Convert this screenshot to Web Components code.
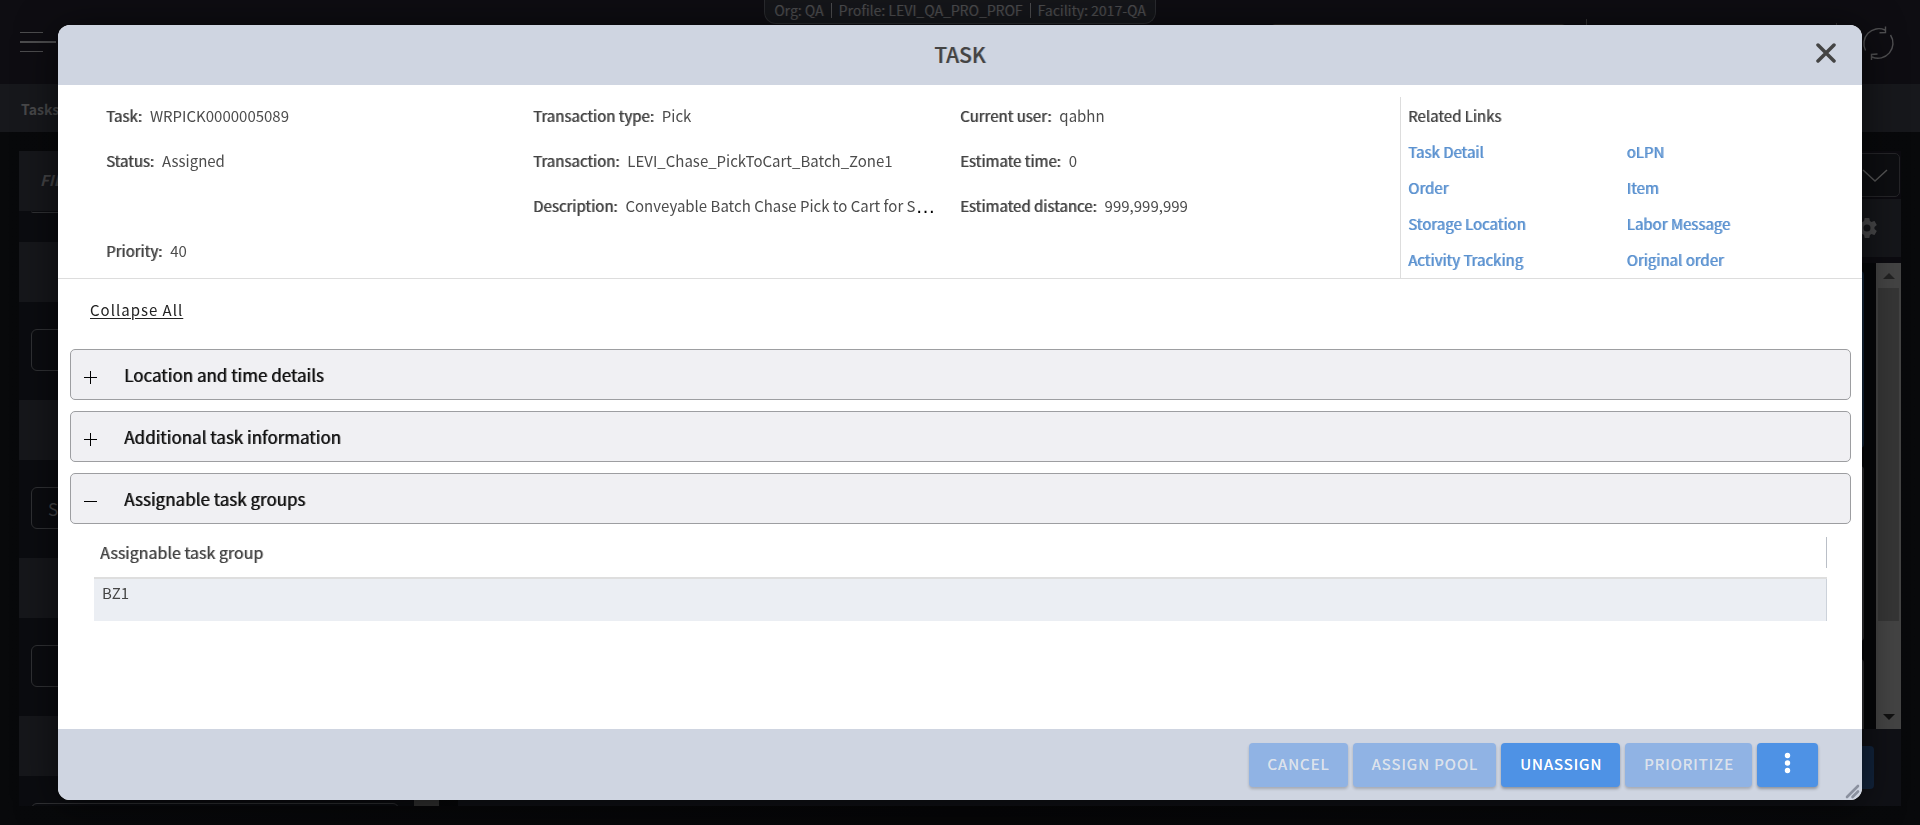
<!DOCTYPE html>
<html lang="en">
<head>
<meta charset="utf-8">
<title>Tasks</title>
<style>
body { margin: 0; background: #08090b; color: #444; font: 15px/20px "Noto Sans CJK SC", "Open Sans", sans-serif; }
</style>
</head>
<body>
<tasks-page></tasks-page>
<task-dialog heading="TASK">
  <task-summary slot="summary">
    <task-field label="Task:">WRPICK0000005089</task-field>
    <task-field label="Transaction type:">Pick</task-field>
    <task-field label="Current user:">qabhn</task-field>
    <task-field label="Status:">Assigned</task-field>
    <task-field label="Transaction:">LEVI_Chase_PickToCart_Batch_Zone1</task-field>
    <task-field label="Estimate time:">0</task-field>
    <span></span>
    <task-field label="Description:" clipped>Conveyable Batch Chase Pick to Cart for S</task-field>
    <task-field label="Estimated distance:">999,999,999</task-field>
    <task-field label="Priority:">40</task-field>
    <related-links slot="links"></related-links>
  </task-summary>
  <accordion-list>
    <accordion-item heading="Location and time details"></accordion-item>
    <accordion-item heading="Additional task information"></accordion-item>
    <accordion-item heading="Assignable task groups" open><group-table></group-table></accordion-item>
  </accordion-list>
  <action-button slot="actions" disabled>CANCEL</action-button>
  <action-button slot="actions" disabled>ASSIGN POOL</action-button>
  <action-button slot="actions">UNASSIGN</action-button>
  <action-button slot="actions" disabled>PRIORITIZE</action-button>
  <action-button slot="actions" name="More actions">
    <svg width="24" height="24" viewBox="0 0 24 24" fill="#fff"><circle cx="11.500" cy="3.500" r="2.700"/><circle cx="11.500" cy="11" r="2.700"/><circle cx="11.500" cy="18.500" r="2.700"/></svg>
  </action-button>
</task-dialog>

<script>
const define = (name, html, setup) => customElements.define(name, class extends HTMLElement {
  connectedCallback() {
    if (this.shadowRoot) return;
    const root = this.attachShadow({ mode: 'open' });
    root.innerHTML = html;
    if (setup) setup(this, root);
  }
});

/* Page behind the dialog, already dimmed */
define('org-pill', `
<style>
:host { display: flex; align-items: center; box-sizing: border-box; height: 24px; padding: 0 9px 3px; background: #15161a; border: 1px solid #2a2b2f; border-top: 0; border-radius: 0 0 12px 12px; color: #4b4b4d; font-size: 14px; line-height: 20px; white-space: nowrap; text-shadow: 1px 0 0 rgba(75,75,77,.3); }
span + span { margin-left: 7px; padding-left: 7px; border-left: 1px solid #4b4b4d; line-height: 15px; }
</style>
<span>Org: QA</span><span>Profile: LEVI_QA_PRO_PROF</span><span>Facility: 2017-QA</span>`);

define('filter-panel', `
<style>
:host { display: flex; flex-direction: column; overflow: hidden; background: #0b0c10; color: #444446; }
h2 { flex: none; margin: 0; height: 60px; padding-left: 21px; background: #16171b; font: italic 700 15px/58px "Noto Sans CJK SC", sans-serif; }
.row { display: flex; flex: 1; min-height: 0; }
.list { flex: 1; overflow: hidden; }
.cut { height: 2px; margin: 0 15px 29px 12px; border-bottom: 1px solid #303134; border-radius: 0 0 5px 5px; box-sizing: border-box; }
.head { height: 60px; margin-bottom: 27px; background: #16171b; }
input { display: block; box-sizing: border-box; width: calc(100% - 27px); height: 42px; margin: 0 0 29px 12px; padding: 0 16px; border: 1px solid #303134; border-radius: 6px; background: transparent; color: inherit; font: 17px/24px "Noto Sans CJK SC", sans-serif; }
input::placeholder { color: #444446; opacity: 1; }
.bar { width: 25px; background: #333; }
</style>
<h2>FILTER</h2>
<div class="row"><div class="list">
<div class="cut"></div>
<div class="head"></div><input aria-label="Filter 1">
<div class="head"></div><input aria-label="Filter 2" placeholder="S">
<div class="head"></div><input aria-label="Filter 3">
<div class="head"></div><input aria-label="Filter 4">
</div><div class="bar"></div></div>`);

define('task-list', `
<style>
:host { display: flex; flex-direction: column; overflow: hidden; background: #0c0b10; }
.sort { flex: none; height: 48px; display: flex; justify-content: flex-end; padding: 0 1px; }
.sort button { width: 260px; height: 44px; margin-top: 2px; padding: 0 11px 0 0; border: 1px solid #252528; border-radius: 5px; background: #0d0e11; text-align: right; }
svg { vertical-align: middle; }
.tools { flex: none; height: 58px; display: flex; align-items: center; justify-content: flex-end; padding-right: 22px; background: #15161a; }
.tools button { border: 0; padding: 0; background: none; line-height: 0; }
.rows { flex: 1; min-height: 0; display: flex; margin-top: 6px; background: #060709; }
.cards { flex: 1; overflow: hidden; padding-right: 12px; }
.card { height: 175px; margin-bottom: 18px; border-right: 2px solid #303032; border-radius: 4px; }
.card.on { height: 177px; margin-top: 8px; border-color: #142638; }
.bar { width: 25px; display: flex; flex-direction: column; align-items: center; background: #444; }
.bar i { width: 21px; height: 333px; background: #363636; }
.up, .down { height: 25px; line-height: 0; display: flex; align-items: center; }
.down { margin-top: auto; }
.foot { flex: none; height: 77px; display: flex; justify-content: flex-end; align-items: flex-start; background: #101116; }
.foot button { width: 120px; height: 43px; margin: 17px 27px 0 0; border: 0; border-radius: 4px; background: #12243c; }
</style>
<div class="sort"><button aria-label="Sort"><svg width="26" height="14" fill="none" stroke="#555" stroke-width="1.500"><path d="M1 1l12 11L25 1"/></svg></button></div>
<div class="tools"><button aria-label="Settings"><svg width="24" height="24" viewBox="0 0 24 24" fill="#48484a"><path d="M19.430 12.980c.040-.320.070-.640.070-.980s-.030-.660-.070-.980l2.110-1.650c.190-.150.240-.420.120-.640l-2-3.460c-.120-.220-.390-.300-.610-.220l-2.490 1c-.520-.400-1.080-.730-1.690-.980l-.380-2.650A.49.49 0 0 0 14 2h-4c-.250 0-.460.180-.490.420l-.380 2.650c-.610.250-1.170.590-1.690.980l-2.490-1c-.230-.090-.490 0-.610.220l-2 3.460c-.130.220-.070.490.120.640l2.110 1.650c-.040.320-.070.650-.070.980s.030.660.070.980l-2.110 1.650c-.190.150-.240.420-.120.640l2 3.460c.120.220.390.300.610.220l2.490-1c.520.400 1.080.730 1.690.980l.380 2.650c.030.240.240.420.490.420h4c.250 0 .460-.180.490-.420l.380-2.650c.610-.250 1.170-.590 1.690-.980l2.490 1c.230.090.490 0 .610-.220l2-3.460c.120-.220.070-.490-.120-.640l-2.110-1.650zM12 15.500a3.500 3.500 0 1 1 0-7 3.500 3.500 0 0 1 0 7z"/></svg></button></div>
<div class="rows"><div class="cards"><div class="card on"></div><div class="card"></div><div class="card"></div></div>
<div class="bar"><span class="up"><svg width="12" height="6"><path d="M0 6L6 0l6 6z" fill="#222"/></svg></span><i></i><span class="down"><svg width="12" height="6"><path d="M0 0l6 6 6-6z" fill="#111"/></svg></span></div></div>
<div class="foot"><button aria-label="Actions"></button></div>`);

define('tasks-page', `
<style>
:host { display: flex; flex-direction: column; height: 100vh; overflow: hidden; background: linear-gradient(90deg, #08090b, #060608 50%, #08090b); }
header { flex: none; display: grid; grid-template-columns: 1fr auto 1fr; align-items: start; height: 84px; background: #0e0d12; }
header button { border: 0; padding: 0; background: none; line-height: 0; }
.menu { margin: 32px 0 0 20px; justify-self: start; }
.end { display: flex; justify-content: flex-end; }
.search { width: 295px; height: 36px; margin: 24px 20px 0 0; box-sizing: border-box; border: 1px solid #2b2624; border-radius: 4px; background: none; }
.line { width: 1px; height: 40px; background: #333; margin-top: 19px; }
.line.low { margin-top: 23px; }
.gap { width: 249px; }
.sync { margin: 24px 25px 0; }
nav { flex: none; height: 48px; padding-left: 21px; background: #17181c; }
nav a { color: #48484a; font-weight: 700; font-size: 14px; line-height: 50px; text-decoration: none; }
main { flex: 1; min-height: 0; display: grid; grid-template-columns: 420px minmax(0, 1fr); gap: 19px; padding: 19px; }
</style>
<header>
<button class="menu" aria-label="Menu"><svg width="36" height="20" stroke="#4c4c4e"><path d="M0 .500h23M0 19.500h23"/><path d="M0 10h36" stroke-width="2"/></svg></button>
<org-pill></org-pill>
<div class="end"><input class="search" aria-label="Search"><span class="line"></span><span class="gap"></span><span class="line low"></span>
<button class="sync" aria-label="Refresh"><svg width="33" height="35" viewBox="0 0 33 35" fill="none" stroke="#505052" stroke-width="1.400"><path d="M3.500 24.500A15 15 0 0 1 23 4M28.500 9A15 15 0 0 1 10 31M23.500 0.500v6l-6 .200M9.500 34v-5.500l6-.500"/></svg></button></div>
</header>
<nav><a href="#tasks">Tasks</a></nav>
<main><filter-panel></filter-panel><task-list></task-list></main>`);

/* Dialog */
define('task-dialog', `
<style>
:host { position: fixed; inset: 25px 58px; display: flex; flex-direction: column; overflow: hidden; border-radius: 12px; background: #fff; box-shadow: 0 5px 40px rgba(0,0,0,.6); }
header { flex: none; display: grid; grid-template-columns: 1fr auto 1fr; align-items: center; height: 60px; background: #cfd5e1; }
h1 { grid-column: 2; margin: 0 0 2px; font-size: 21px; line-height: 30px; font-weight: 500; text-shadow: 1px 0 0 rgba(68,68,68,.3); }
header button { justify-self: end; margin: 0 26px 4px 0; padding: 0; border: 0; background: none; line-height: 0; cursor: pointer; }
.body { flex: 1; min-height: 0; overflow: auto; }
footer { position: relative; flex: none; display: flex; align-items: center; justify-content: flex-end; gap: 5px; height: 71px; padding-right: 44px; background: #cfd5e1; }
.grip { position: absolute; right: 2px; bottom: 1px; }
</style>
<header><h1></h1><button aria-label="Close"><svg width="20" height="20" fill="none" stroke="#444" stroke-width="3.500" stroke-linecap="round"><path d="M2 2l16 16M18 2L2 18"/></svg></button></header>
<slot name="summary"></slot>
<div class="body"><slot></slot></div>
<footer><slot name="actions"></slot><svg class="grip" width="15" height="15" fill="none" stroke="#8a909e" stroke-width="2.600" stroke-linecap="round"><path d="M2 13L13 2M7.500 13l5.500-5.500"/></svg></footer>`,
(el, root) => { root.querySelector('h1').textContent = el.getAttribute('heading'); });

define('task-summary', `
<style>
:host { flex: none; display: grid; grid-template-columns: minmax(0, 1fr) minmax(0, 462px); border-bottom: 1px solid #ddd; }
.fields { display: grid; grid-template-columns: repeat(3, minmax(0, 1fr)); grid-auto-rows: 45px; padding: 8px 13px 0 48px; }
</style>
<div class="fields"><slot></slot></div><slot name="links"></slot>`);

define('task-field', `
<style>
:host { display: flex; align-items: center; min-width: 0; line-height: 24px; white-space: nowrap; }
b { margin-right: 8px; font-weight: 400; text-shadow: 1px 0 0 rgba(68,68,68,.6); }
span { color: #4c4c4c; }
i { color: #000; font: 20px/24px "Liberation Sans", sans-serif; }
</style>
<b></b><span><slot></slot></span>`,
(el, root) => {
  root.querySelector('b').textContent = el.getAttribute('label');
  if (el.hasAttribute('clipped')) root.append(Object.assign(document.createElement('i'), { textContent: '…' }));
});

define('related-links', `
<style>
:host { display: block; margin-top: 12px; padding: 1px 17px 0 7px; border-left: 1px solid #ddd; line-height: 36px; }
h2 { margin: 0; font-size: 15px; font-weight: 400; text-shadow: 1px 0 0 rgba(68,68,68,.5); }
nav { display: grid; grid-template-columns: 1fr 1fr; }
a { color: #5b92d0; text-decoration: none; justify-self: start; text-shadow: 1px 0 0 rgba(91,146,208,.7); }
</style>
<h2>Related Links</h2>
<nav><a href="#detail">Task Detail</a><a href="#olpn">oLPN</a><a href="#order">Order</a><a href="#item">Item</a><a href="#storage">Storage Location</a><a href="#labor">Labor Message</a><a href="#activity">Activity Tracking</a><a href="#original">Original order</a></nav>`);

define('accordion-list', `
<style>
:host { display: block; padding: 0 11px 0 12px; }
a { display: inline-block; margin: 16px 20px 24px; color: #222; line-height: 30px; letter-spacing: 1px; text-decoration: underline; text-underline-offset: 2px; }
.items { display: flex; flex-direction: column; gap: 11px; }
</style>
<a href="#collapse">Collapse All</a>
<div class="items"><slot></slot></div>`,
(el, root) => root.querySelector('a').addEventListener('click', e => {
  e.preventDefault();
  el.querySelectorAll('accordion-item').forEach(i => i.toggle(false));
}));

define('accordion-item', `
<style>
:host { display: block; }
button { display: flex; align-items: center; gap: 26px; box-sizing: border-box; width: 100%; height: 51px; padding: 0 13px; border: 1px solid #9d9ea1; border-radius: 5px; background: #f0f0f3; color: #111; font: 400 17px/24px "Noto Sans CJK SC", sans-serif; text-align: left; text-shadow: 1px 0 0 rgba(17,17,17,.6); cursor: pointer; }
button[aria-expanded=true] .v, .panel[hidden] { display: none; }
</style>
<button><svg width="14" height="18" stroke="#000" stroke-width="1"><path d="M0 11.500h13"/><path class="v" d="M6.500 5v13"/></svg><span></span></button>
<div class="panel"><slot></slot></div>`,
(el, root) => {
  const b = root.querySelector('button'), p = root.querySelector('.panel');
  root.querySelector('span').textContent = el.getAttribute('heading');
  el.toggle = on => { b.setAttribute('aria-expanded', on); p.hidden = !on; };
  b.addEventListener('click', () => el.toggle(p.hidden));
  el.toggle(el.hasAttribute('open'));
});

define('group-table', `
<style>
:host { display: block; padding: 0 24px; }
table { width: 100%; border-collapse: separate; border-spacing: 0; text-align: left; }
th { padding: 13px 0 9px; border-bottom: 2px solid #dedede; font-size: 16px; font-weight: 400; line-height: 31px; text-shadow: 1px 0 0 rgba(68,68,68,.5); }
th div { padding-left: 6px; border-right: 1px solid #babfc7; }
td { height: 42px; padding: 0 0 0 8px; box-sizing: border-box; border-right: 1px solid #ccd2da; background: #ebeef3; line-height: 28px; vertical-align: top; }
</style>
<table><thead><tr><th scope="col"><div>Assignable task group</div></th></tr></thead><tbody><tr><td>BZ1</td></tr></tbody></table>`);

define('action-button', `
<style>
:host { display: block; }
button { display: flex; align-items: center; height: 44px; padding: 0 18px 2px 19px; border: 0; border-radius: 4px; background: #4e92e5; color: #fff; box-shadow: 0 2px 3px rgba(0,0,0,.3); font: 400 15px/24px "Noto Sans CJK SC", sans-serif; letter-spacing: 1px; text-shadow: 0 0 0 currentColor; cursor: pointer; }
button:disabled { background: #90b3e4; color: #dce2ec; cursor: default; box-shadow: 0 2px 3px rgba(0,0,0,.2); }
::slotted(svg) { display: block; }
</style>
<button><slot></slot></button>`,
(el, root) => {
  const b = root.querySelector('button');
  b.disabled = el.hasAttribute('disabled');
  if (el.hasAttribute('name')) b.setAttribute('aria-label', el.getAttribute('name'));
});
</script>
</body>
</html>
